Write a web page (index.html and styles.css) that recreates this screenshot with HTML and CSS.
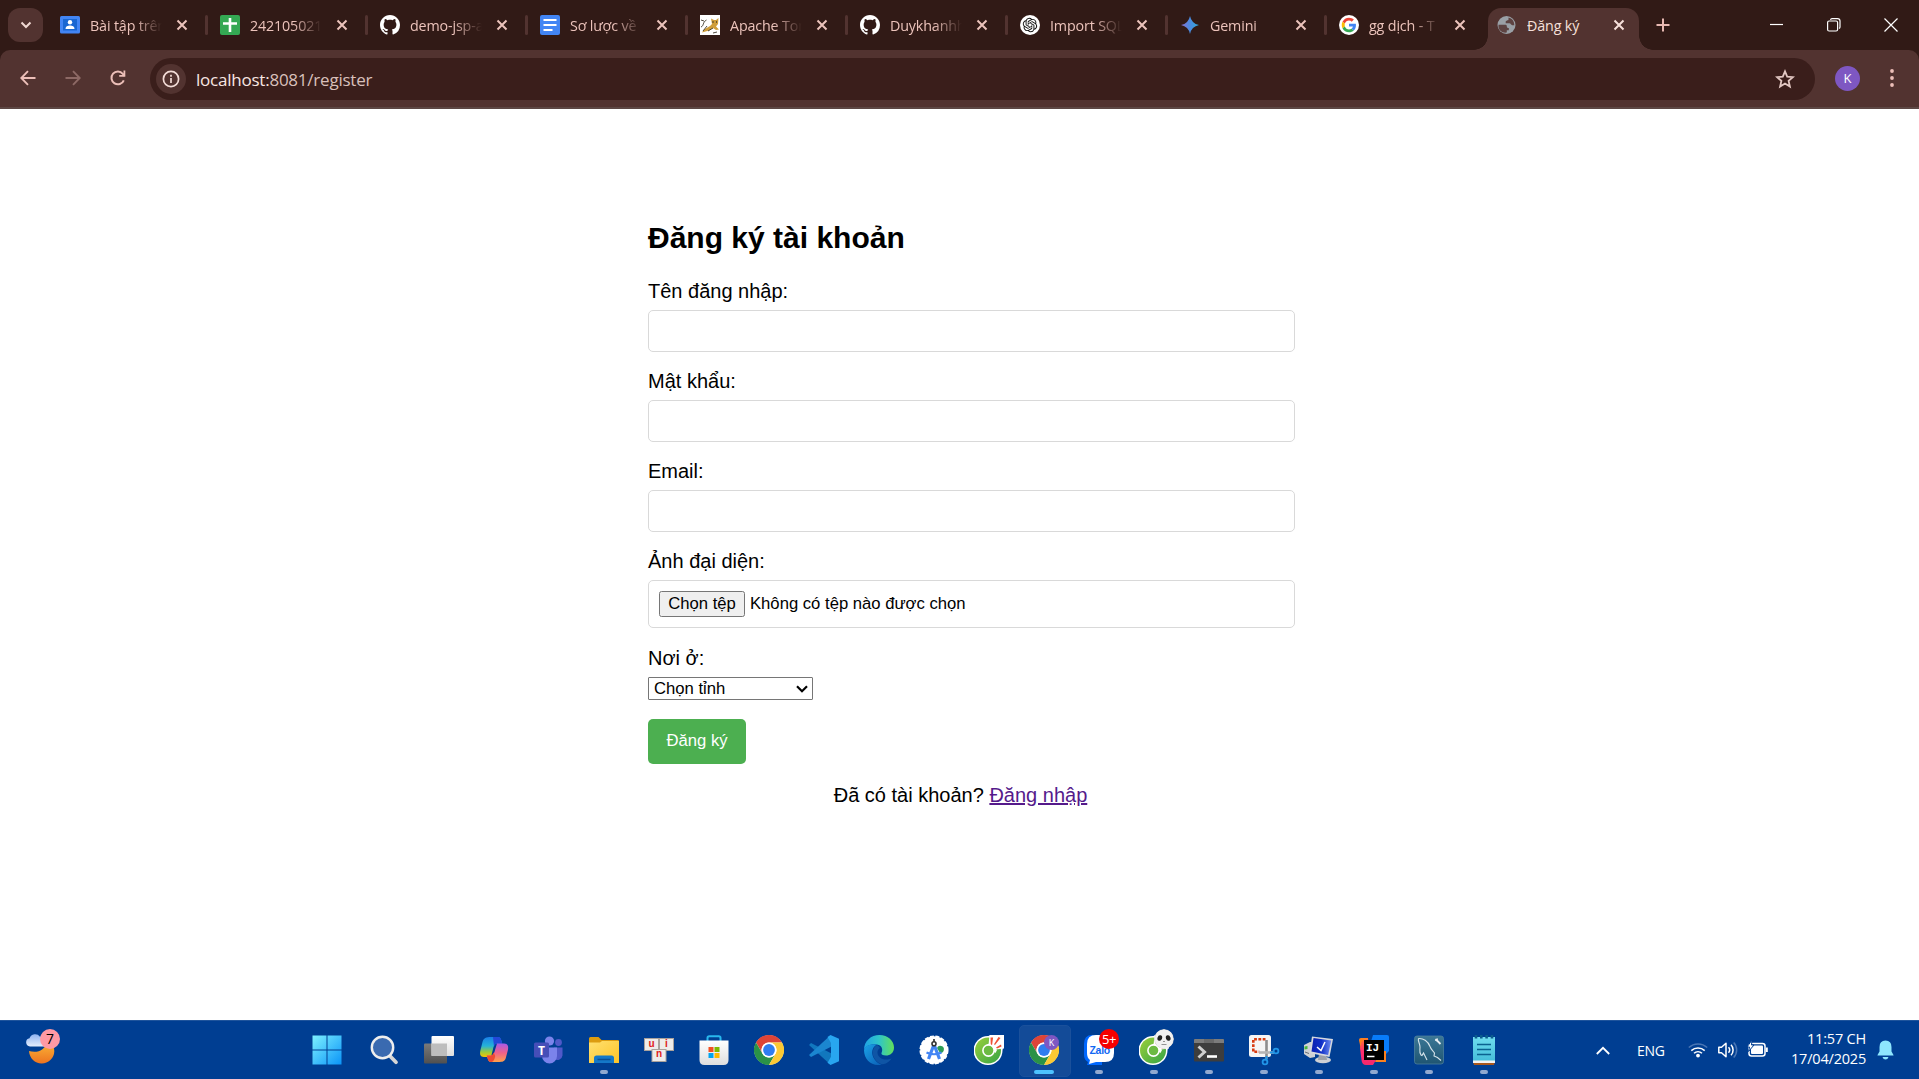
FILE: index.html
```html
<!DOCTYPE html>
<html lang="vi">
<head>
<meta charset="utf-8">
<title>Đăng ký</title>
<link rel="stylesheet" href="styles.css">
</head>
<body>
<svg class="defs" width="0" height="0" aria-hidden="true">
  <defs>
    <linearGradient id="gWin" x1="0" y1="0" x2="1" y2="1"><stop offset="0" stop-color="#7df0ff"/><stop offset="1" stop-color="#0a94f8"/></linearGradient>
    <linearGradient id="gMoon" x1="0" y1="0" x2="0" y2="1"><stop offset="0" stop-color="#fbbc3a"/><stop offset="1" stop-color="#ee7420"/></linearGradient>
    <linearGradient id="gCloud" x1="0" y1="0" x2="0" y2="1"><stop offset="0" stop-color="#8fb4f2"/><stop offset="1" stop-color="#e4edfc"/></linearGradient>
    <linearGradient id="gFolder" x1="0" y1="0" x2="1" y2="1"><stop offset="0" stop-color="#ffe070"/><stop offset="1" stop-color="#fdc428"/></linearGradient>
    <linearGradient id="gCopA" x1="0" y1="0" x2="0" y2="1"><stop offset="0" stop-color="#1a7fe8"/><stop offset=".45" stop-color="#25b3d8"/><stop offset=".75" stop-color="#9ccb3b"/><stop offset="1" stop-color="#f5c400"/></linearGradient>
    <linearGradient id="gCopB" x1="0" y1="0" x2="0" y2="1"><stop offset="0" stop-color="#a65ae8"/><stop offset=".5" stop-color="#f0608a"/><stop offset="1" stop-color="#ffa14a"/></linearGradient>
    <linearGradient id="gEdgeA" x1="0" y1="0" x2="1" y2="0"><stop offset="0" stop-color="#1fa2e6"/><stop offset=".5" stop-color="#2fc5c9"/><stop offset="1" stop-color="#63e05a"/></linearGradient>
    <linearGradient id="gEdgeB" x1="0" y1="0" x2="1" y2="1"><stop offset="0" stop-color="#1ba3e8"/><stop offset="1" stop-color="#0a5cb4"/></linearGradient>
    <linearGradient id="gCoc" x1="0" y1="0" x2="1" y2="1"><stop offset="0" stop-color="#9bd03c"/><stop offset="1" stop-color="#35a344"/></linearGradient>
    <linearGradient id="gStar" x1="0" y1="0" x2="1" y2="0"><stop offset="0" stop-color="#8a6fd0"/><stop offset=".5" stop-color="#4a8be0"/><stop offset="1" stop-color="#2fa9d8"/></linearGradient>
    <linearGradient id="gNote" x1="0" y1="0" x2="0" y2="1"><stop offset="0" stop-color="#6fdcee"/><stop offset="1" stop-color="#41bbd9"/></linearGradient>
    <linearGradient id="gSql" x1="0" y1="0" x2="0" y2="1"><stop offset="0" stop-color="#3c7896"/><stop offset="1" stop-color="#1f5572"/></linearGradient>
    <linearGradient id="gIj" x1="0" y1="0" x2="0" y2="1"><stop offset="0" stop-color="#ff7a2a"/><stop offset=".5" stop-color="#ff2d6f"/><stop offset="1" stop-color="#f5276c"/></linearGradient>
    <linearGradient id="gGrey" x1="0" y1="0" x2="0" y2="1"><stop offset="0" stop-color="#7a7a7a"/><stop offset="1" stop-color="#505050"/></linearGradient>
    <linearGradient id="gPaper" x1="0" y1="0" x2="0" y2="1"><stop offset="0" stop-color="#ffffff"/><stop offset="1" stop-color="#dedede"/></linearGradient>
    <linearGradient id="gScreen" x1="0" y1="0" x2="1" y2="0"><stop offset="0" stop-color="#0a1fb0"/><stop offset=".5" stop-color="#1030c8"/><stop offset="1" stop-color="#6f8cf0"/></linearGradient>

    <symbol id="close" viewBox="0 0 12 12"><path d="M1.500 1.500l9 9M10.500 1.500l-9 9" stroke="currentColor" stroke-width="2" fill="none"/></symbol>
    <symbol id="github" viewBox="0 0 16 16"><path fill="#fff" d="M8 0C3.58 0 0 3.58 0 8c0 3.54 2.29 6.53 5.47 7.59.4.07.55-.17.55-.38 0-.19-.01-.82-.01-1.49-2.01.37-2.53-.49-2.69-.94-.09-.23-.48-.94-.82-1.13-.28-.15-.68-.52-.01-.53.63-.01 1.08.58 1.23.82.72 1.21 1.87.87 2.33.66.07-.52.28-.87.51-1.07-1.78-.2-3.64-.89-3.64-3.95 0-.87.31-1.59.82-2.15-.08-.2-.36-1.02.08-2.12 0 0 .67-.21 2.2.82.64-.18 1.32-.27 2-.27s1.36.09 2 .27c1.53-1.04 2.2-.82 2.2-.82.44 1.1.16 1.92.08 2.12.51.56.82 1.27.82 2.15 0 3.07-1.87 3.75-3.65 3.95.29.25.54.73.54 1.48 0 1.07-.01 1.93-.01 2.2 0 .21.15.46.55.38A8.01 8.01 0 0 0 16 8c0-4.42-3.58-8-8-8z"/></symbol>
    <symbol id="chrome" viewBox="0 0 30 30">
      <circle cx="15" cy="15" r="14.800" fill="#fff"/>
      <path d="M15 7.500H28A15 15 0 0 0 2 7.500L8.500 18.750A7.500 7.500 0 0 1 15 7.500z" fill="#dd4437"/>
      <path d="M8.500 18.750L2 7.500A15 15 0 0 0 15 30L21.500 18.750A7.500 7.500 0 0 1 8.500 18.750z" fill="#2a9247"/>
      <path d="M21.500 18.750L15 30A15 15 0 0 0 28 7.500H15A7.500 7.500 0 0 1 21.500 18.750z" fill="#fcc934"/>
      <circle cx="15" cy="15" r="7.500" fill="#fff"/><circle cx="15" cy="15" r="5.900" fill="#2f7df0"/>
    </symbol>
    <symbol id="coccoc" viewBox="0 0 30 30">
      <path d="M14 1A14.500 14.500 0 1 0 28.500 15.500L29.500 9V.5H17z" fill="#fff"/>
      <circle cx="14" cy="15.500" r="13" fill="url(#gCoc)"/>
      <path d="M14 15.500L15.500 0H30v13.500z" fill="#fff"/>
      <path d="M16.500 2.500h2.600L18 10.500h-1.200zM24.500 2l2 1-5.500 7-1-.8zM22 12.500l5-3 .5 2-4.500 2z" fill="#ef5136"/>
      <path d="M12 10.500l3-2 4.500 2.500 3.500 4-1.500 3z" fill="#fff"/>
      <circle cx="14.500" cy="15.500" r="5.600" fill="#6cba42" stroke="#fff" stroke-width="1.600"/>
    </symbol>
  </defs>
</svg>

<header class="tabstrip">
  <button class="tab-search"><svg width="12" height="8" viewBox="0 0 12 8"><path d="M1.500 1.500L6 6l4.500-4.500" fill="none" stroke="#f0d8d2" stroke-width="2"/></svg></button>
  <nav class="tabs">
    <div class="tab">
      <svg class="fav" viewBox="0 0 20 20"><rect y="1" width="20" height="17.500" rx="1.500" fill="#4285f4"/><rect x="3" y="4" width="14" height="11.500" fill="#1967d2"/><circle cx="10" cy="7.300" r="2.200" fill="#fff"/><path d="M5.500 14c0-2.800 2.200-3.600 4.500-3.600s4.500.8 4.500 3.600z" fill="#fff"/></svg>
      <span class="title">Bài tập trên</span><svg class="x"><use href="#close"/></svg><i></i></div>
    <div class="tab">
      <svg class="fav" viewBox="0 0 20 20"><rect width="20" height="20" rx="2" fill="#34a853"/><path d="M10 3v14M3 8.500h14" stroke="#fff" stroke-width="2.600"/></svg>
      <span class="title">242105021</span><svg class="x"><use href="#close"/></svg><i></i></div>
    <div class="tab">
      <svg class="fav"><use href="#github"/></svg>
      <span class="title">demo-jsp-a</span><svg class="x"><use href="#close"/></svg><i></i></div>
    <div class="tab">
      <svg class="fav" viewBox="0 0 20 20"><rect width="20" height="20" rx="2" fill="#4285f4"/><path d="M3.500 5h13M3.500 10h13M3.500 15h9" stroke="#fff" stroke-width="2.200"/></svg>
      <span class="title">Sơ lược về</span><svg class="x"><use href="#close"/></svg><i></i></div>
    <div class="tab">
      <svg class="fav" viewBox="0 0 20 20"><rect width="20" height="20" fill="#fff"/><path d="M4 14.500l6-3.500 2-2-1-5.500 3 1.500h2l2.500-2-.5 6-2 2.500 3 3-3 .5-3-2-4 2.500-7 2z" fill="#cf9d3a"/><path d="M1 12C4 11 2.500 7 6.500 5M1 5l3 1M7 11l-4 5M8 16l5-3M13 18l4-1" stroke="#3a3428" stroke-width=".9" fill="none"/><path d="M12.500 7h1M16 7h.8" stroke="#222" stroke-width="1.300"/></svg>
      <span class="title">Apache Tom</span><svg class="x"><use href="#close"/></svg><i></i></div>
    <div class="tab">
      <svg class="fav"><use href="#github"/></svg>
      <span class="title">Duykhanhh</span><svg class="x"><use href="#close"/></svg><i></i></div>
    <div class="tab">
      <svg class="fav" viewBox="0 0 40 40"><circle cx="20" cy="20" r="20" fill="#fff"/><path transform="translate(5.600 5.600) scale(1.2)" fill="#111" d="M22.2819 9.8211a5.9847 5.9847 0 0 0-.5157-4.9108 6.0462 6.0462 0 0 0-6.5098-2.9A6.0651 6.0651 0 0 0 4.9807 4.1818a5.9847 5.9847 0 0 0-3.9977 2.9 6.0462 6.0462 0 0 0 .7427 7.0966 5.98 5.98 0 0 0 .511 4.9107 6.051 6.051 0 0 0 6.5146 2.9001A5.9847 5.9847 0 0 0 13.2599 24a6.0557 6.0557 0 0 0 5.7718-4.2058 5.9894 5.9894 0 0 0 3.9977-2.9001 6.0557 6.0557 0 0 0-.7475-7.0729zm-9.022 12.6081a4.4755 4.4755 0 0 1-2.8764-1.0408l.1419-.0804 4.7783-2.7582a.7948.7948 0 0 0 .3927-.6813v-6.7369l2.02 1.1686a.071.071 0 0 1 .038.052v5.5826a4.504 4.504 0 0 1-4.4945 4.4944zm-9.6607-4.1254a4.4708 4.4708 0 0 1-.5346-3.0137l.142.0852 4.783 2.7582a.7712.7712 0 0 0 .7806 0l5.8428-3.3685v2.3324a.0804.0804 0 0 1-.0332.0615L9.74 19.9502a4.4992 4.4992 0 0 1-6.1408-1.6464zM2.3408 7.8956a4.485 4.485 0 0 1 2.3655-1.9728V11.6a.7664.7664 0 0 0 .3879.6765l5.8144 3.3543-2.0201 1.1685a.0757.0757 0 0 1-.071 0l-4.8303-2.7865A4.504 4.504 0 0 1 2.3408 7.872zm16.5963 3.8558L13.1038 8.364 15.1192 7.2a.0757.0757 0 0 1 .071 0l4.8303 2.7913a4.4944 4.4944 0 0 1-.6765 8.1042v-5.6772a.79.79 0 0 0-.407-.667zm2.0107-3.0231l-.142-.0852-4.7735-2.7818a.7759.7759 0 0 0-.7854 0L9.409 9.2297V6.8974a.0662.0662 0 0 1 .0284-.0615l4.8303-2.7866a4.4992 4.4992 0 0 1 6.6802 4.66zM8.3065 12.863l-2.02-1.1638a.0804.0804 0 0 1-.038-.0567V6.0742a4.4992 4.4992 0 0 1 7.3757-3.4537l-.142.0805L8.704 5.459a.7948.7948 0 0 0-.3927.6813zm1.0976-2.3654l2.602-1.4998 2.6069 1.4998v2.9994l-2.5974 1.4997-2.6067-1.4997Z"/></svg>
      <span class="title">Import SQL</span><svg class="x"><use href="#close"/></svg><i></i></div>
    <div class="tab tab-159">
      <svg class="fav" viewBox="0 0 20 20"><path d="M10 1Q11.500 8.500 19 10Q11.500 11.500 10 19Q8.500 11.500 1 10Q8.500 8.500 10 1z" fill="url(#gStar)"/></svg>
      <span class="title">Gemini</span><svg class="x"><use href="#close"/></svg><i></i></div>
    <div class="tab tab-last">
      <svg class="fav" viewBox="-9 -9 66 66"><circle cx="24" cy="24" r="33" fill="#fff"/><path fill="#EA4335" d="M24 9.500c3.540 0 6.710 1.220 9.210 3.600l6.850-6.850C35.900 2.380 30.470 0 24 0 14.620 0 6.510 5.380 2.560 13.220l7.980 6.190C12.430 13.720 17.740 9.500 24 9.500z"/><path fill="#4285F4" d="M46.980 24.550c0-1.570-.15-3.090-.38-4.550H24v9.020h12.940c-.58 2.960-2.260 5.480-4.780 7.180l7.730 6c4.510-4.180 7.090-10.360 7.090-17.650z"/><path fill="#FBBC05" d="M10.530 28.590c-.48-1.450-.76-2.990-.76-4.590s.27-3.140.76-4.590l-7.980-6.190C.92 16.460 0 20.120 0 24c0 3.880.92 7.540 2.560 10.780l7.970-6.190z"/><path fill="#34A853" d="M24 48c6.480 0 11.930-2.130 15.890-5.810l-7.730-6c-2.150 1.450-4.920 2.300-8.160 2.300-6.260 0-11.570-4.220-13.470-9.910l-7.980 6.190C6.510 42.620 14.620 48 24 48z"/></svg>
      <span class="title">gg dịch - T</span><svg class="x"><use href="#close"/></svg></div>
    <div class="tab tab-active">
      <svg class="fav" viewBox="0 0 20 20"><circle cx="9.500" cy="10" r="9" fill="#9aa0a6"/><path d="M1.500 9.800h6.300c2 0 2 .6 2 1.700s1 1.500 2 1.500v2.300h-2v2.200c-4 .8-7.800-2-8.300-5.200z" fill="#523330" opacity=".85"/><path d="M11.500 2.600v1.800c0 1.400-2.800.6-2.800 2.300v1.600h3.600c1.600 0 1.600 1.900 3 1.900h2c0-4-2.300-6.800-5.800-7.600z" fill="#523330" opacity=".85"/></svg>
      <span class="title">Đăng ký</span><svg class="x"><use href="#close"/></svg></div>
  </nav>
  <svg class="newtab" width="14" height="14" viewBox="0 0 14 14"><path d="M7 .5v13M.5 7h13" stroke="#e8b9b2" stroke-width="2"/></svg>
  <div class="winctl">
    <svg width="14" height="14" viewBox="0 0 14 14"><path d="M0 6.500h13" stroke="#fff" stroke-width="1.200"/></svg>
    <svg width="14" height="14" viewBox="0 0 14 14"><rect x=".6" y="3" width="10" height="10" rx="1.500" fill="none" stroke="#fff" stroke-width="1.200"/><path d="M3.500 1.800q.3-1.200 1.500-1.200h5.500q2.500 0 2.500 2.500V9q0 1.200-1 1.500" fill="none" stroke="#fff" stroke-width="1.200"/></svg>
    <svg width="14" height="14" viewBox="0 0 14 14"><path d="M.5.500l13 13M13.500.500l-13 13" stroke="#fff" stroke-width="1.200"/></svg>
  </div>
</header>

<div class="toolbar-wrap">
<div class="toolbar">
  <svg class="nav" viewBox="0 0 16 16"><path d="M15.500 8H1.500M8 1.200L1.300 8 8 14.800" fill="none" stroke="#ecbfb8" stroke-width="1.900"/></svg>
  <svg class="nav" viewBox="0 0 16 16"><path d="M.5 8h14M8 1.200L14.700 8 8 14.800" fill="none" stroke="#8d6965" stroke-width="1.900"/></svg>
  <svg class="nav" viewBox="0 0 16 16"><path d="M13.800 10.300A6.400 6.400 0 1 1 12.800 3.800L14.500 5.800" fill="none" stroke="#ecbfb8" stroke-width="2"/><path d="M15.300.600v6.100H9.200V5h4.300V.600z" fill="#ecbfb8"/></svg>
  <div class="omnibox">
    <span class="info"><svg width="18" height="18" viewBox="0 0 18 18"><circle cx="9" cy="9" r="7.600" fill="none" stroke="#f3dcd7" stroke-width="1.700"/><path d="M9 8v5M9 4.800v1.900" stroke="#f3dcd7" stroke-width="1.700"/></svg></span>
    <span class="url">localhost:<em>8081/register</em></span>
    <svg class="star" width="20" height="20" viewBox="0 0 20 20"><path d="M10 2.400l2.200 5.300 5.700.5-4.300 3.700 1.300 5.600L10 14.500l-4.900 3 1.300-5.600L2.100 8.200l5.700-.5z" fill="none" stroke="#e2c7c2" stroke-width="1.800"/></svg>
  </div>
  <span class="avatar">K</span>
  <svg class="menu" width="4" height="18" viewBox="0 0 4 18"><g fill="#ecbfb8"><circle cx="2" cy="2" r="1.900"/><circle cx="2" cy="9" r="1.900"/><circle cx="2" cy="16" r="1.900"/></g></svg>
</div>
</div>

<main class="page">
  <form class="register" onsubmit="return false">
    <h2>Đăng ký tài khoản</h2>
    <label for="u">Tên đăng nhập:</label>
    <input class="field" id="u" type="text">
    <label for="p">Mật khẩu:</label>
    <input class="field" id="p" type="password">
    <label for="e">Email:</label>
    <input class="field" id="e" type="email">
    <label>Ảnh đại diện:</label>
    <div class="field file"><button class="choose" type="button">Chọn tệp</button><span>Không có tệp nào được chọn</span></div>
    <label>Nơi ở:</label>
    <div class="select"><span>Chọn tỉnh</span><svg width="12" height="8" viewBox="0 0 12 8"><path d="M1 1.300l5 4.900 5-4.900" fill="none" stroke="#000" stroke-width="2.200"/></svg></div>
    <button class="submit" type="submit">Đăng ký</button>
    <p>Đã có tài khoản? <a href="#">Đăng nhập</a></p>
  </form>
</main>

<footer class="taskbar">
  <div class="weather">
    <svg width="36" height="38" viewBox="0 0 36 38"><path d="M3 16.500C11 19 20 16 21.500 5.500 26 8 28.500 12 28.300 17A12.500 12.500 0 0 1 15.500 29C9 29 3.500 24 3 16.500z" transform="translate(0 .5)" fill="url(#gMoon)"/><path d="M4 12.500a4.200 4.200 0 0 1-.5-8.300A6 6 0 0 1 14 2.700a5 5 0 0 1 6 9.800z" fill="url(#gCloud)"/></svg>
    <b>7</b>
  </div>
  <div class="apps">
    <div class="app start"><svg viewBox="0 0 32 32"><path d="M1.500 1.500h14v14h-14zM16.500 1.500h14v14h-14zM1.500 16.500h14v14h-14zM16.500 16.500h14v14h-14z" fill="url(#gWin)"/></svg></div>
    <div class="app"><svg viewBox="0 0 32 32"><path d="M21 21l7 7.200" stroke="#d6d6d6" stroke-width="3.800" stroke-linecap="round"/><circle cx="14.500" cy="13.500" r="10.700" fill="#3a6ab0" stroke="#eee" stroke-width="2.400"/></svg></div>
    <div class="app"><svg viewBox="0 0 32 32"><rect x="1" y="9.500" width="23" height="20" rx="1" fill="url(#gGrey)"/><rect x="8.500" y="2" width="22.500" height="20" rx="1" fill="url(#gPaper)"/><rect x="8.500" y="9.500" width="15.500" height="12.500" fill="#bdbdbd"/></svg></div>
    <div class="app"><svg viewBox="0 0 32 32"><path d="M13 3h7c2 0 2.800 1.500 3.500 4l.8 2.500h-5C17 9.500 16 11 15 15l-2 8h-7c-4 0-4.500-3-3.500-7l2-8C5.500 4 8 3 13 3z" fill="url(#gCopA)"/><path d="M15 3h5c2 0 2.800 1.500 3.500 4l.8 2.500h-5q-2.500 0-3.300 3z" fill="#2447d8"/><path d="M20 28h-7c-2 0-2.800-1.500-3.500-4l-.8-2.500h4C15 21.500 16 20 17 16l2-6.500h7c4 0 4.800 3 3.800 7l-2 7.500c-1 3.500-3 4-7.800 4z" fill="url(#gCopB)"/><path d="M13 28c-2 0-2.800-1.500-3.500-4l-.8-2.500h4q2 0 3-3l1.500 3.500q-1 6-4.200 6z" fill="#ee4a32"/></svg></div>
    <div class="app"><svg viewBox="0 0 32 32"><circle cx="25.500" cy="8.500" r="3.400" fill="#5059c9"/><path d="M21 13.500h8.500v8a5 5 0 0 1-8.500 3z" fill="#5059c9"/><circle cx="16.500" cy="7" r="4.600" fill="#7b83eb"/><path d="M9 13.500h15v8.500a7.500 7.500 0 0 1-15 0z" fill="#7b83eb"/><rect x="1" y="8.500" width="15" height="15" rx="1.500" fill="#464eb8"/><text x="8.500" y="20.500" class="t-teams">T</text></svg></div>
    <div class="app run"><svg viewBox="0 0 32 32"><path d="M1 4.500Q1 3 2.500 3h8l3 3H30q1 0 1 1.200V16H1z" fill="#dc9c10"/><path d="M1 8.500h11L14 7h17v22H1z" fill="url(#gFolder)"/><path d="M6 29v-5q0-2.500 2.500-2.500h15Q26 21.500 26 24v5z" fill="#1478c8"/><path d="M9.500 25.500h13" stroke="#0b4f94" stroke-width="1.500"/></svg></div>
    <div class="app"><svg viewBox="0 0 32 32"><g fill="#eeecea" stroke="#aaa29c"><rect x="1.500" y="4.500" width="14" height="12"/><rect x="16.500" y="4.500" width="14" height="12"/><rect x="9" y="15.500" width="14" height="12"/></g><g class="t-uni"><text x="8.500" y="12.500">u</text><text x="23.500" y="12.500">i</text><text x="16" y="23">n</text></g></svg></div>
    <div class="app"><svg viewBox="0 0 32 32"><path d="M9.500 8V4q0-1.700 1.700-1.700h9.600q1.700 0 1.700 1.700v4" fill="none" stroke="#28b8ee" stroke-width="2"/><path d="M1.500 6.500h29V26q0 5-5 5h-19q-5 0-5-5z" fill="url(#gPaper)"/><path d="M10.500 13h5v5h-5z" fill="#f25022"/><path d="M16.500 13h5v5h-5z" fill="#7fba00"/><path d="M10.500 19h5v5h-5z" fill="#00a4ef"/><path d="M16.500 19h5v5h-5z" fill="#ffb900"/></svg></div>
    <div class="app"><svg viewBox="-1 -1 32 32"><use href="#chrome" width="30" height="30"/></svg></div>
    <div class="app"><svg viewBox="0 0 32 32"><path d="M3 9.500L1 11.500 20 29l3.500-3V20z" transform="translate(0 -.500)" fill="#1177be"/><path d="M3 22.500L1 20.500 20 3l3.500 3v6z" transform="translate(0 .5)" fill="#1b86d0"/><path d="M22.500 1l8.500 3.800v22.400L22.500 31l-3-2.200 3.500-6V9l-3.500-6z" fill="#28a6f0"/></svg></div>
    <div class="app"><svg viewBox="0 0 32 32"><path d="M1 16C1 7 8 1 16.500 1S31 7 31 13.500C31 19 27 21.500 23 21.500c-3.500 0-5-1-4.500-2.500 1.500-3 1-7.500-4.500-8.500C8 9.500 2.500 12 1 16z" fill="url(#gEdgeA)"/><path d="M1 16c1.500-4.500 7-6.500 13-5.500-4 2-5.500 6-4.500 10.500S15 30 19 30.500C9 33 1 26 1 16z" fill="url(#gEdgeB)"/><path d="M14 11c-3.500 2-4.800 6-4 10s5 9 10 9.200c4-.7 7-3 8.700-6-4.500 2.300-9 1.600-11.700-.7S13 16.500 17 14q-1-2-3-3z" fill="#0f55a5"/></svg></div>
    <div class="app"><svg viewBox="0 0 32 32"><circle cx="16" cy="16" r="13.800" fill="#fff" stroke="#fff" stroke-width="1.500" stroke-dasharray="4 1.500"/><path d="M19 14a3.600 3.600 0 1 1 3 5z" fill="#2d9d55"/><path d="M16 10.500L10.500 25M16 10.500L21.500 25" stroke="#4285f4" stroke-width="3.200"/><path d="M8.500 18.500q7.500 3.500 15 0" fill="none" stroke="#4285f4" stroke-width="2.200"/><circle cx="16" cy="9.800" r="2" fill="#fff" stroke="#333" stroke-width="1.600"/><path d="M16 5v3" stroke="#333" stroke-width="1.700"/></svg></div>
    <div class="app"><svg viewBox="-1 -1 32 32"><use href="#coccoc" width="30" height="30"/></svg></div>
    <div class="app run current"><svg viewBox="-1 -1 32 32"><use href="#chrome" width="30" height="30"/></svg><span class="badge kbadge">K</span></div>
    <div class="app run"><svg viewBox="0 0 32 32"><path d="M9 1h10v30h-6l-9 0 1-3q-4-2-4-7V10q0-9 8-9z" fill="#0068ff"/><path d="M13 1h9q9 0 9 9v9q0 9-9 9h-9l-7 2 1-4q-3-2-3-7V10q0-9 9-9z" fill="#fff"/><text x="6.500" y="19.500" class="t-zalo">Zalo</text></svg><span class="badge red">5+</span></div>
    <div class="app run"><svg viewBox="-1 -1 32 32"><use href="#coccoc" width="30" height="30"/></svg><svg class="badge panda" viewBox="0 0 20 20"><circle cx="10" cy="10" r="10" fill="#cfcfcf"/><ellipse cx="10" cy="10" rx="9.300" ry="9.500" fill="#f1f1f1"/><ellipse cx="5.800" cy="9" rx="2.300" ry="2.800" fill="#222" transform="rotate(20 5.800 9)"/><ellipse cx="14.200" cy="9" rx="2.300" ry="2.800" fill="#222" transform="rotate(-20 14.200 9)"/><path d="M9 12.500h2M7.500 15.500h5" stroke="#888" stroke-width=".9"/></svg></div>
    <div class="app run"><svg viewBox="0 0 32 32"><rect x="1" y="5" width="30" height="22.500" rx="1" fill="#3d3d3d"/><path d="M1 9V6Q1 5 2 5h28q1 0 1 1v3z" fill="#7c7c7c"/><path d="M11 5h10v4H11z" fill="#6a6a6a"/><path d="M5.500 12.500l6 5.500-6 5.500" fill="none" stroke="#cfcfcf" stroke-width="3"/><path d="M14 22.500h10" stroke="#fff" stroke-width="2.600"/></svg></div>
    <div class="app run"><svg viewBox="0 0 32 32"><rect x="1" y="1" width="22" height="22" rx="2.500" fill="#f5f5f5"/><path d="M17.500 5.300H5.300v12.500h6" fill="none" stroke="#d83b10" stroke-width="2.600" stroke-dasharray="2.800 1.500"/><path d="M18.500 6v19" stroke="#8d8d8d" stroke-width="2.600"/><path d="M11 18.500h15" stroke="#b5b5b5" stroke-width="2.600"/><circle cx="17" cy="28" r="2.400" fill="none" stroke="#2196e8" stroke-width="1.800"/><circle cx="28" cy="17" r="2.400" fill="none" stroke="#2196e8" stroke-width="1.800"/><path d="M18.500 22v4M22 18.500h4" stroke="#2196e8" stroke-width="2"/></svg></div>
    <div class="app run"><svg viewBox="0 0 32 32"><path d="M1 11l6-3h5v15l-5 1-6-4z" fill="#cfd1d4"/><path d="M1.500 12.500l3-.5v3l-3 .5z" fill="#46b83c"/><path d="M2 18l4 1.500" stroke="#686d73"/><ellipse cx="20" cy="26" rx="8" ry="3.200" fill="#cdd0d4"/><path d="M16 20h7l1 6h-9z" fill="#9da1a8"/><path d="M9 2.500L30 5l-3.500 18L6.500 19z" fill="#d5d8de"/><path d="M10.500 4l17.800 2.500-3.200 14.500L8.500 17.500z" fill="url(#gScreen)"/><path d="M14 13l4 3.500L22 8" fill="none" stroke="#fff" stroke-width="1.500"/></svg></div>
    <div class="app run"><svg viewBox="0 0 32 32"><path d="M15 1h14q2 0 2 2v14l-7 7-13-10z" fill="#087cfa"/><path d="M21 17h7v11H17z" fill="#fc801d"/><path d="M1 6q0-2 2-2h7v12H3z" fill="#fc801d"/><path d="M3.500 8L9 4l9 12v10l-3 5H8q-4 0-4.500-5L2 14z" fill="url(#gIj)"/><rect x="6" y="6" width="20" height="20" fill="#000"/><text x="8" y="16.500" class="t-ij">IJ</text><path d="M9 22.500h7.500" stroke="#fff" stroke-width="1.500"/></svg></div>
    <div class="app run"><svg viewBox="0 0 32 32"><rect x="1.500" y="2" width="29" height="28" rx="2.500" fill="url(#gSql)" stroke="#4b7f9c" stroke-width=".8"/><path d="M5.500 4.500C10 4 15 7 17 12.500c1 3 3 4 4.500 6.500l-.5 3 3.500 1.500 3.500 3M5.500 4.500C4.500 7 7 9.500 7 13c0 3-1 5 1 8l1 .500 1.500-2.500 3.500 7" fill="none" stroke="#d5e3ea" stroke-width="1.100"/><path d="M22.500 5l5 5" stroke="#e6edf2" stroke-width="1.800"/><path d="M21.800 6.800l3-2.800v3.500z" fill="#e6edf2"/></svg></div>
    <div class="app run"><svg viewBox="0 0 32 32"><path d="M5 3h22v26H5z" fill="url(#gNote)"/><path d="M5 28h22l-1 3H6z" fill="#a8571c"/><path d="M5 26.500h22V29H5z" fill="#f2f2f2"/><path d="M9 10.500h14M9 15.500h14M9 20.500h14" stroke="#0b6290" stroke-width="1.500"/><path d="M8 1v3.500M13.300 1v3.500M18.600 1v3.500M24 1v3.500" stroke="#0b5c8c" stroke-width="2.600"/></svg></div>
  </div>
  <div class="tray">
    <svg class="up" width="14" height="9" viewBox="0 0 14 9"><path d="M.8 8L7 1.800 13.200 8" fill="none" stroke="#fff" stroke-width="1.800"/></svg>
    <span class="lang">ENG</span>
    <svg class="wifi" width="20" height="16" viewBox="0 0 20 16"><path d="M.8 5.500a13.500 13.500 0 0 1 18.400 0" fill="none" stroke="#4a76b4" stroke-width="1.500"/><path d="M3.300 8.600a9.800 9.800 0 0 1 13.400 0M6 11.300a6 6 0 0 1 8 0" fill="none" stroke="#fff" stroke-width="1.500"/><circle cx="10" cy="13.600" r="1.900" fill="#fff"/></svg>
    <svg class="vol" width="21" height="18" viewBox="0 0 21 18"><path d="M.8 6.200h2.700L8 2.200v13.600l-4.500-4H.8z" fill="none" stroke="#fff" stroke-width="1.500" stroke-linejoin="round"/><path d="M10.500 6.300a4 4 0 0 1 0 5.400M13 3.800a7.500 7.500 0 0 1 0 10.400" fill="none" stroke="#fff" stroke-width="1.500"/><path d="M15.700 1.500a11 11 0 0 1 0 15" fill="none" stroke="#4a76b4" stroke-width="1.500"/></svg>
    <svg class="bat" width="21" height="18" viewBox="0 0 21 18"><rect x="2" y="3.500" width="16" height="12.500" rx="2.500" fill="none" stroke="#fff" stroke-width="1.500"/><rect x="4" y="5.500" width="12" height="8.500" rx="1" fill="#fff"/><path d="M19.800 7.500v4.500" stroke="#fff" stroke-width="2"/><path d="M5 0L0 7h2.500L1.500 11.500 7 5H4.500z" fill="#fff" stroke="#003e92" stroke-width="1"/></svg>
    <span class="clock">11:57 CH<br>17/04/2025</span>
    <svg class="bell" width="17" height="20" viewBox="0 0 17 20"><path d="M8.500.500q6 0 6 6.500v4.500l2 3.500v.5H.5V15l2-3.500V7q0-6.500 6-6.500z" fill="#8ee6fd"/><path d="M5.500 17h6q-.8 2.500-3 2.500T5.500 17z" fill="#8ee6fd"/></svg>
  </div>
</footer>
</body>
</html>
```

FILE: styles.css
```css
* { box-sizing: border-box; }
html, body { height: 100%; }
body {
  margin: 0;
  width: 1919px;
  height: 1079px;
  overflow: hidden;
  display: flex;
  flex-direction: column;
  background: #fff;
  font-family: "Liberation Sans", Arial, sans-serif;
}
button { font-family: inherit; }
svg { display: block; flex: none; }
.defs { position: absolute; }

/* Browser tab strip */
.tabstrip {
  flex: none;
  height: 50px;
  display: flex;
  align-items: flex-start;
  padding-left: 8px;
  background: #311a16;
  font-family: "Open Sans", "Noto Sans", sans-serif;
}
.tab-search {
  width: 35px;
  height: 34px;
  margin-top: 8px;
  border: 0;
  border-radius: 12px;
  padding: 0;
  background: #523330;
  display: grid;
  place-items: center;
}
.tabs { display: flex; height: 50px; margin-left: 17px; }
.tab {
  width: 160px;
  height: 50px;
  display: flex;
  align-items: center;
  color: #ecc3bb;
  font-size: 14.3px;
}
.fav { width: 20px; height: 20px; }
.title {
  width: 75px;
  margin-left: 10px;
  padding-top: 2px;
  overflow: hidden;
  white-space: nowrap;
  line-height: 24px;
  letter-spacing: -0.15px;
  -webkit-mask-image: linear-gradient(90deg, #000 58%, transparent 96%);
  mask-image: linear-gradient(90deg, #000 58%, transparent 96%);
}
.x { width: 12px; height: 12px; margin-left: 11px; }
.tab i { width: 3px; height: 20px; margin-left: 17px; border-radius: 2px; background: #523330; }
.tab-159 { width: 159px; }
.tab-159 .x { margin-left: 10px; }
.tab-last { width: 149px; }
.tab-last .x { margin-left: 10px; }
.tab-active {
  position: relative;
  width: 151px;
  height: 42px;
  margin-top: 8px;
  padding: 0 0 8px 9px;
  border-radius: 13px 13px 0 0;
  background: #523330;
  color: #f6e0da;
}
.tab-active .title { margin-left: 10px; -webkit-mask-image: none; mask-image: none; }
.tab-active .x { margin-left: 11px; }
.tab-active::before, .tab-active::after {
  content: "";
  position: absolute;
  bottom: 0;
  width: 14px;
  height: 14px;
}
.tab-active::before { left: -14px; background: radial-gradient(circle at 0 0, transparent 13.5px, #523330 14px); }
.tab-active::after { right: -14px; background: radial-gradient(circle at 100% 0, transparent 13.5px, #523330 14px); }
.newtab { margin: 18px 0 0 17px; }
.winctl { display: flex; gap: 43px; margin: 18px 21px 0 auto; }

/* Browser toolbar */
.toolbar-wrap { flex: none; background: #311a16; }
.toolbar {
  height: 59px;
  display: flex;
  align-items: center;
  padding: 0 25px 1px 20px;
  border-bottom: 2px solid #5d4744;
  border-radius: 10px 10px 0 0;
  background: #523330;
}
.nav { width: 16px; height: 16px; margin-right: 29px; }
.omnibox {
  width: 1665px;
  height: 42px;
  margin: 2px 0 0 -5px;
  display: flex;
  align-items: center;
  padding: 0 20px 0 6px;
  border-radius: 21px;
  background: #3a1e1b;
  font-family: "Open Sans", "Noto Sans", sans-serif;
}
.info {
  width: 30px;
  height: 30px;
  display: grid;
  place-items: center;
  border-radius: 50%;
  background: #523330;
}
.url { flex: 1; margin-left: 10px; color: #f8e6e2; font-size: 17px; letter-spacing: -0.23px; }
.url em { font-style: normal; color: #d9c0bb; }
.avatar {
  width: 25px;
  height: 25px;
  margin: 1px 0 0 20px;
  border-radius: 50%;
  background: #7e57c2;
  color: #fff;
  font: 13px/25px "Open Sans", sans-serif;
  text-align: center;
}
.menu { margin-left: auto; }

/* Page content */
.page { flex: 1; display: flex; flex-direction: column; align-items: center; padding: 112px 0 0 2px; }
.register {
  width: 625px;
  display: flex;
  flex-direction: column;
  align-items: flex-start;
  font-size: 20px;
  color: #000;
}
.register h2 { margin: 0 0 25px; font-size: 30px; line-height: 34px; }
.register label { height: 23px; line-height: 23px; margin-bottom: 7px; }
.field {
  width: 647px;
  height: 42px;
  margin: 0 0 18px;
  padding: 10px;
  border: 1px solid #d9d9d9;
  border-radius: 5px;
  background: #fff;
  outline: 0;
}
.file {
  height: 48px;
  margin-bottom: 19px;
  display: flex;
  align-items: center;
  gap: 5px;
  font-size: 16.67px;
}
.choose {
  width: 86px;
  height: 26px;
  padding: 0 0 1px;
  border: 1px solid #767676;
  border-radius: 2.5px;
  background: #efefef;
  font-size: 16.67px;
  line-height: 23px;
  white-space: nowrap;
}
.select {
  width: 165px;
  height: 23px;
  display: flex;
  align-items: center;
  justify-content: space-between;
  padding: 0 4px 0 5px;
  border: 1px solid #767676;
  border-radius: 1px;
  font-size: 16.67px;
  line-height: 20px;
}
.submit {
  width: 98px;
  height: 45px;
  margin-top: 19px;
  padding: 0 0 2px;
  border: 0;
  border-radius: 5px;
  background: #4caf50;
  color: #fff;
  font-size: 16.67px;
}
.register p { align-self: center; margin: 20px 0 0; line-height: 23px; }
.register a { color: #551a8b; }

/* Taskbar */
.taskbar {
  flex: none;
  height: 59px;
  display: flex;
  border-top: 1px solid #1f549c;
  background: #003e92;
  color: #fff;
  font-family: "Open Sans", "Noto Sans", sans-serif;
}
.weather { position: relative; width: 60px; padding: 13px 0 0 26px; }
.weather b {
  position: absolute;
  left: 40px;
  top: 8px;
  width: 20px;
  height: 20px;
  border-radius: 50%;
  background: #ff99a4;
  color: #000;
  font-size: 14px;
  font-weight: 400;
  line-height: 20px;
  text-align: center;
}
.apps { display: flex; margin-left: 241px; }
.app { position: relative; width: 55px; height: 58px; padding: 13px 0 0 12px; }
.app > svg { width: 32px; height: 32px; }
.start { padding-left: 10px; }
.run::after {
  content: "";
  position: absolute;
  left: 24px;
  top: 49px;
  width: 8px;
  height: 4px;
  border-radius: 2px;
  background: #91a9d0;
}
.current::before {
  content: "";
  position: absolute;
  left: 3px;
  top: 4px;
  width: 50px;
  height: 50px;
  border: 1px solid #1a509b;
  border-radius: 5px;
  background: #134b98;
}
.current > svg { position: relative; }
.current::after { left: 18px; width: 20px; background: #4cc2ff; }
.app .badge { position: absolute; border-radius: 50%; text-align: center; }
.kbadge { left: 28px; top: 14px; width: 15px; height: 15px; background: #7e57c2; font-size: 9px; line-height: 15px; }
.red { left: 28px; top: 8px; width: 20px; height: 20px; background: #f50000; font-size: 13px; line-height: 20px; letter-spacing: -0.5px; }
.app .panda { left: 28px; top: 8px; width: 20px; height: 20px; }
.t-teams { font: 700 12px "Open Sans", sans-serif; fill: #fff; text-anchor: middle; }
.t-uni { font: 700 10px "Liberation Sans", sans-serif; fill: #e02020; stroke: none; text-anchor: middle; }
.t-zalo { font: 700 10.5px "Liberation Sans", sans-serif; fill: #1268f3; letter-spacing: -0.3px; }
.t-ij { font: 700 11px "Liberation Mono", monospace; fill: #fff; }
.tray { margin-left: auto; display: flex; align-items: center; padding-right: 25px; font-size: 14px; }
.lang { width: 29px; margin-left: 27px; letter-spacing: -0.3px; }
.wifi { margin-left: 22px; }
.vol { margin-left: 10px; }
.bat { margin-left: 8px; margin-top: -2px; }
.clock { width: 80px; margin: -2px 11px 0 18px; text-align: right; white-space: nowrap; line-height: 20px; font-size: 14.5px; letter-spacing: -0.2px; }
```
